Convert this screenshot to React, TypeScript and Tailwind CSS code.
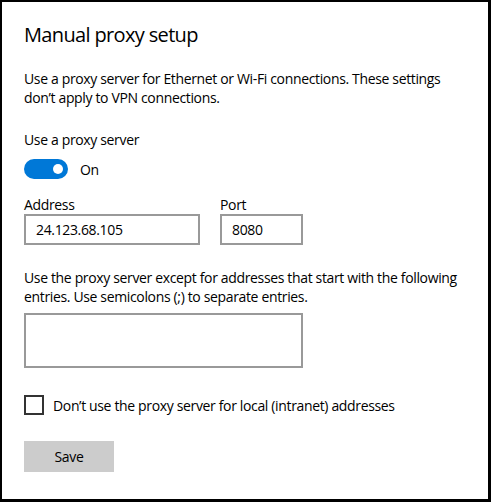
export default function App() {
  return (
    <div
      className="w-[491px] h-[502px] bg-white border-t-2 border-l-2 border-r-[3px] border-b-[3px] border-black text-black pl-[22px] pt-[19px] tracking-[-0.35px]"
      style={{ fontFamily: '"Open Sans", "Noto Sans", sans-serif' }}
    >
      <h1 className="text-[20px] leading-[28px] font-normal tracking-[-0.65px]">Manual proxy setup</h1>

      <p className="mt-[20px] text-[14px] leading-[19px] whitespace-nowrap">
        Use a proxy server for Ethernet or Wi-Fi connections. These settings
        <br />
        don’t apply to VPN connections.
      </p>

      <div className="mt-[23px] text-[14px] leading-[19px]">Use a proxy server</div>

      <div className="mt-[10px] flex items-center gap-3">
        <div className="w-[44px] h-[20px] rounded-full bg-[#0078d7] flex items-center justify-end pr-[5px]">
          <div className="w-[10px] h-[10px] rounded-full bg-white" />
        </div>
        <span className="text-[14px] leading-[19px]">On</span>
      </div>

      <div className="mt-[16px] flex gap-5 text-[14px] leading-[19px]">
        <label className="flex flex-col">
          <span>Address</span>
          <div className="w-[176px] h-[31px] border-2 border-[#999999] pl-[10px] flex items-center">
            24.123.68.105
          </div>
        </label>
        <label className="flex flex-col">
          <span>Port</span>
          <div className="w-[83px] h-[31px] border-2 border-[#999999] pl-[10px] flex items-center">
            8080
          </div>
        </label>
      </div>

      <p className="mt-[23px] text-[14px] leading-[19px] whitespace-nowrap">
        Use the proxy server except for addresses that start with the following
        <br />
        entries. Use semicolons (;) to separate entries.
      </p>

      <div className="mt-[7px] w-[279px] h-[55px] border-2 border-[#999999]" />

      <label className="mt-[27px] flex items-center gap-[9px] text-[14px] leading-[19px]">
        <span className="w-[20px] h-[20px] border-2 border-[#333333] shrink-0" />
        <span>Don’t use the proxy server for local (intranet) addresses</span>
      </label>

      <button className="mt-[26px] w-[90px] h-[31px] bg-[#cccccc] text-[14px] flex items-center justify-center">
        Save
      </button>
    </div>
  );
}
